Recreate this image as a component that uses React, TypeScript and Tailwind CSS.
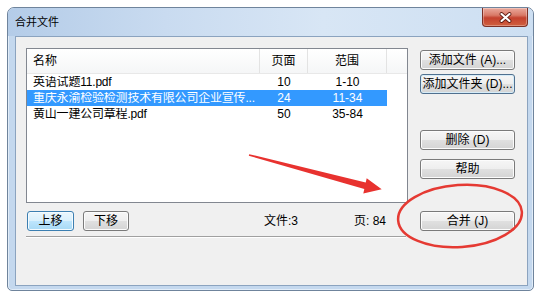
import React from 'react';

const FILES = [
  { name: '英语试题11.pdf', pages: 10, range: '1-10' },
  { name: '重庆永渝检验检测技术有限公司企业宣传...', pages: 24, range: '11-34', selected: true },
  { name: '黄山一建公司章程.pdf', pages: 50, range: '35-84' },
];

type Tone = 'normal' | 'hot' | 'focus';

const WinButton: React.FC<{ label: string; tone?: Tone; className?: string }> = ({ label, tone = 'normal', className = '' }) => {
  const skin =
    tone === 'hot'
      ? 'border-[#3c7fb1] bg-[linear-gradient(#eaf6fd_0%,#d9f0fc_50%,#bee6fd_50%,#a7d9f5_100%)] shadow-[inset_0_0_0_1px_#f4fbff]'
      : tone === 'focus'
        ? 'border-[#50708f] bg-[linear-gradient(#f6f6f6_0%,#eeeeee_50%,#e0e0e0_50%,#d4d4d4_100%)] shadow-[inset_0_0_0_1px_#d6ecf8]'
        : 'border-[#7a7a7a] bg-[linear-gradient(#f6f6f6_0%,#eeeeee_50%,#e0e0e0_50%,#d4d4d4_100%)] shadow-[inset_0_0_0_1px_#fcfcfc]';
  return (
    <button
      className={`flex h-[20px] items-center justify-center rounded-[3px] border text-[12px] leading-none text-black ${skin} ${className}`}
    >
      {label}
    </button>
  );
};

export default function App() {
  return (
    <div className="relative h-[297px] w-[542px] overflow-hidden bg-white pl-[7px] pt-[7px] font-['Liberation_Sans','Noto_Sans_CJK_SC',sans-serif] text-black">
      {/* window */}
      <div className="flex h-[284px] w-[527px] flex-col rounded-t-[7px] rounded-b-[5px] border border-[#6f849c] bg-[#c4d8ee] shadow-[inset_0_0_0_1px_#e2edf9]">
        {/* title bar */}
        <div className="relative flex h-[28px] items-center rounded-t-[6px] bg-[linear-gradient(90deg,#b4cce8_0%,#c9dbf0_30%,#d8e6f5_60%,#cddff2_100%)] pl-[7px]">
          <span className="text-[11px] leading-none">合并文件</span>
          <div className="absolute right-[5px] top-0 flex h-[19px] w-[46px] items-center justify-center rounded-b-[4px] border border-t-0 border-[#7c3025] bg-[linear-gradient(#eaa99c_0%,#d97a68_40%,#c4412e_55%,#d0603f_100%)] shadow-[inset_0_0_0_1px_rgba(255,255,255,0.3)]">
            <svg width="13" height="11" viewBox="0 0 13 11">
              <path d="M2.5 2 L10.5 9 M10.5 2 L2.5 9" stroke="#5e1d14" strokeWidth="3.8" strokeLinecap="round" />
              <path d="M2.5 2 L10.5 9 M10.5 2 L2.5 9" stroke="#ffffff" strokeWidth="2.1" strokeLinecap="round" />
            </svg>
          </div>
        </div>

        {/* client area */}
        <div className="mb-[4px] ml-[7px] mr-[5px] flex flex-1 border border-[#8ba3bf] bg-[#f0f0f0] pl-[10px] pt-[11px]">
          {/* left column */}
          <div className="flex w-[382px] flex-col">
            <div className="flex h-[155px] flex-col border border-[#828790] bg-white text-[12px]">
              <div className="flex h-[25px] border-b border-[#e8e8e8] bg-[linear-gradient(#ffffff,#f5f6f7)]">
                <div className="flex w-[233px] items-center border-r border-[#e3e3e3] pl-[6px]">名称</div>
                <div className="flex w-[48px] items-center justify-center border-r border-[#e3e3e3]">页面</div>
                <div className="flex w-[79px] items-center justify-center border-r border-[#e3e3e3]">范围</div>
                <div className="flex-1" />
              </div>
              {FILES.map((f) => (
                <div
                  key={f.range}
                  className={`flex h-[16px] w-[360px] items-center leading-none ${f.selected ? 'bg-[#3399ff] text-white' : ''}`}
                >
                  <div className="w-[233px] overflow-hidden whitespace-nowrap pl-[6px] tracking-[-0.2px]">{f.name}</div>
                  <div className="w-[48px] text-center">{f.pages}</div>
                  <div className="w-[79px] text-center">{f.range}</div>
                </div>
              ))}
            </div>

            <div className="mt-[8px] flex items-center text-[12px]">
              <WinButton label="上移" tone="hot" className="ml-px w-[47px]" />
              <WinButton label="下移" className="ml-[9px] w-[46px]" />
              <span className="ml-[135px]">文件:3</span>
              <span className="ml-[56px]">页: 84</span>
            </div>

            <div className="mt-[5px] h-[2px] w-[380px] border-t border-b border-t-[#a0a0a0] border-b-white" />
          </div>

          {/* right column */}
          <div className="ml-[12px] flex w-[95px] flex-col">
            <WinButton label="添加文件 (A)..." className="mt-[2px]" />
            <WinButton label="添加文件夹 (D)..." tone="focus" className="mt-[4px]" />
            <WinButton label="删除 (D)" className="mt-[36px]" />
            <WinButton label="帮助" className="mt-[9px]" />
            <WinButton label="合并 (J)" className="mt-[32px]" />
          </div>
        </div>
      </div>

      {/* red annotation layer */}
      <svg className="pointer-events-none absolute left-0 top-0" width="542" height="297" viewBox="0 0 542 297">
        <polygon
          points="249.2,154.2 365.7,182.6 366.7,178.3 381.7,189.3 363.3,193.5 364.3,188.9 248.8,155.8"
          fill="#e8322f"
        />
        <ellipse
          cx="460"
          cy="216"
          rx="62"
          ry="31"
          transform="rotate(-4 460 216)"
          fill="none"
          stroke="#e53a33"
          strokeWidth="2.5"
        />
      </svg>
    </div>
  );
}
